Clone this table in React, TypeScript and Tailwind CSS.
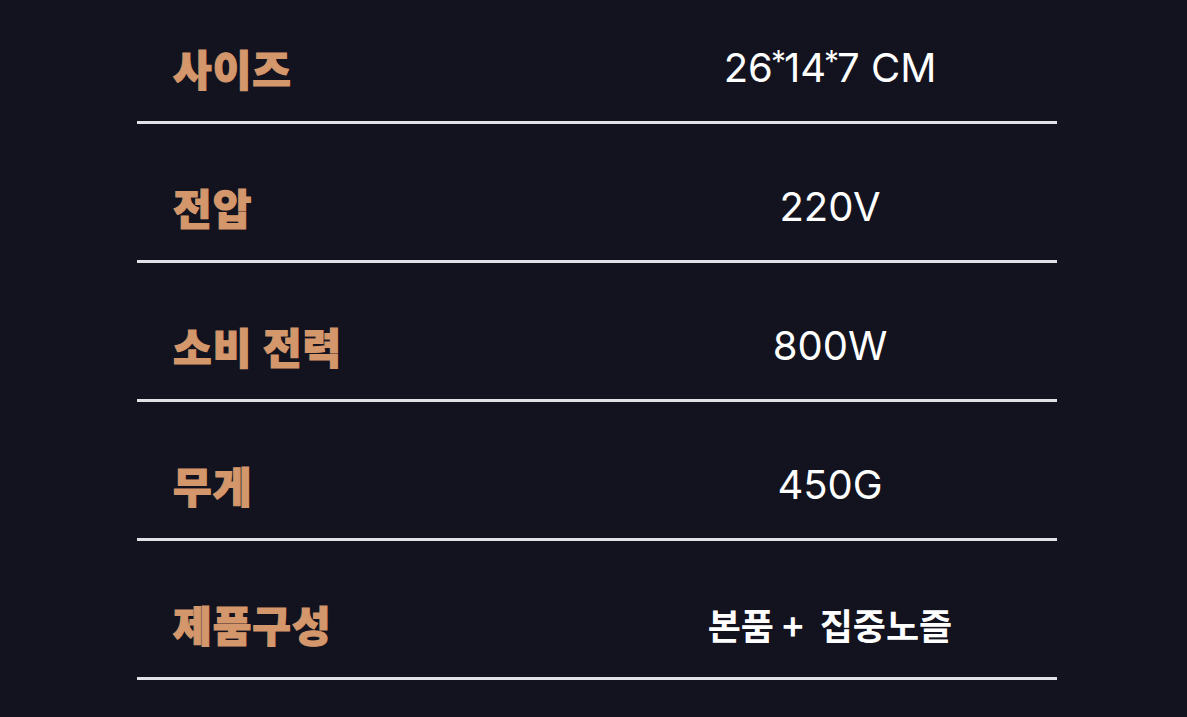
import React from "react";

const specs = [
  { label: "사이즈", value: "26*14*7 CM" },
  { label: "전압", value: "220V" },
  { label: "소비 전력", value: "800W" },
  { label: "무게", value: "450G" },
  { label: "제품구성", value: "본품 +  집중노즐", ko: true },
];

// raised, narrow asterisks like the reference's geometric face
const renderValue = (v: string) =>
  v.split(/(\*)/).map((part, i) =>
    part === "*" ? (
      <span key={i} className="inline-block text-[30px] leading-none align-[10px] -mx-[2px]">
        *
      </span>
    ) : (
      <span key={i}>{part}</span>
    )
  );

const App: React.FC = () => {
  return (
    <div className="w-[1187px] h-[717px] bg-[#13131f] overflow-hidden">
      <div className="ml-[137px] w-[920px] pt-[44px]">
        {specs.map((s, i) => (
          <div
            key={s.label}
            className={`flex items-center border-b-[3px] border-[#e2e2e6] pb-[29px] ${i === 0 ? "" : "pt-[59px]"}`}
          >
            <div className="w-[466px] pl-[36px] h-[48px] leading-[48px] text-[42px] font-black text-[#d3976b] tracking-[1px] [-webkit-text-stroke:1.2px_#d3976b] font-['Noto_Sans_CJK_KR','Noto_Sans',sans-serif]">
              {s.label}
            </div>
            <div className="flex-1 text-center h-[48px] leading-[48px]">
              {s.ko ? (
                <span className="text-[36px] font-semibold text-white whitespace-pre font-['Noto_Sans_CJK_KR','Noto_Sans',sans-serif]">
                  {s.value}
                </span>
              ) : (
                <span className="text-[40px] font-normal text-white font-['Inter','Noto_Sans',sans-serif]">
                  {renderValue(s.value)}
                </span>
              )}
            </div>
          </div>
        ))}
      </div>
    </div>
  );
};

export default App;
